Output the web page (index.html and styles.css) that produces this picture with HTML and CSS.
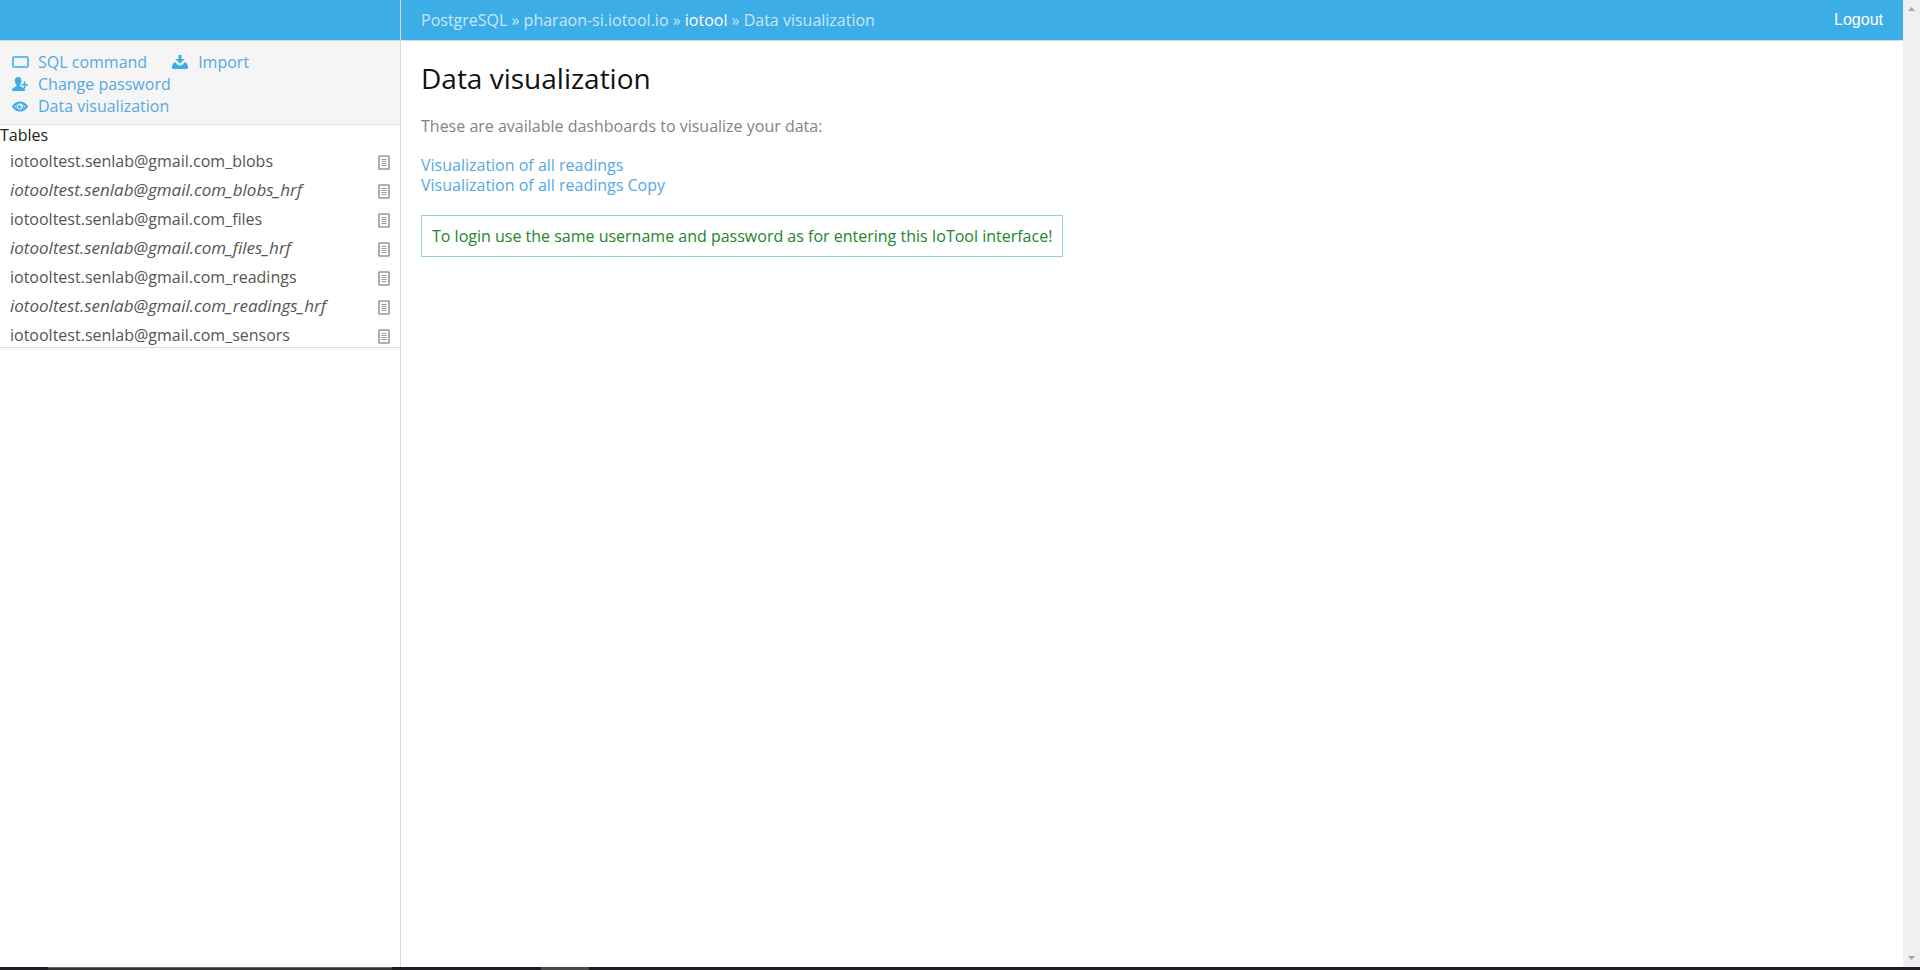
FILE: index.html
```html
<!DOCTYPE html>
<html lang="en">
<head>
<meta charset="utf-8">
<title>Data visualization - IoTool</title>
<link rel="stylesheet" href="styles.css">
</head>
<body>
<svg class="defs" aria-hidden="true">
  <symbol id="sheet" viewBox="0 0 12 15">
    <rect x="1" y="1" width="10" height="13" rx="0.5" fill="none" stroke="#999" stroke-width="1.6"/>
    <path d="M3.5 4.5h5M3.5 6.5h5M3.5 8.5h5M3.5 10.5h5" stroke="#999"/>
  </symbol>
</svg>
<div class="window">
  <aside class="sidebar">
    <div class="bar"></div>
    <nav class="actions">
      <div class="action-row">
        <a href="#sql"><svg class="icon" viewBox="0 0 18 16"><rect x="2" y="3" width="15" height="10" rx="1" fill="none" stroke="currentColor" stroke-width="1.6"/></svg>SQL command</a>
        <a href="#import"><svg class="icon" viewBox="0 0 18 16"><path d="M7.5 1h3v4h3.2L9 9.5 4.300 5h3.200zM3 8.500h2c.6 2 2 3 4 3s3.400-1 4-3h2l2 3.500v1.500q0 1.500-1.500 1.500h-13Q1 15 1 13.500V12z" fill="currentColor"/></svg>Import</a>
      </div>
      <div class="action-row">
        <a href="#password"><svg class="icon" viewBox="0 0 18 16"><path d="M7 1c2.500 0 3.400 1.500 3.400 3.800 0 2-.6 3-1.400 4v1.400l4 1.700q1 .5 1 3.100H1q0-2.600 1-3.100l3.500-1.700V8.800c-1-1-1.700-2-1.700-4C3.800 2.500 4.700 1 7 1zM12.800 5.500h1.600V8H17v1.600h-2.600v2.600h-1.600V9.600h-2.400V8h2.400z" fill="currentColor"/></svg>Change password</a>
      </div>
      <div class="action-row">
        <a href="#visualization"><svg class="icon" viewBox="0 0 18 16"><path fill-rule="evenodd" d="M1 8.500C3 5 5.500 3.500 9 3.500s6 1.500 8 5c-2 3.400-4.500 5-8 5s-6-1.600-8-5zm3 0c.5.900 1 1.500 1.600 2a4.500 4.500 0 0 1 0-4C5 7 4.500 7.600 4 8.500zm10 0c-.5-.9-1-1.500-1.600-2a4.500 4.500 0 0 1 0 4c.6-.5 1.100-1.100 1.600-2zM9 5.500a3 3 0 1 0 0 6 3 3 0 0 0 0-6z" fill="currentColor"/><path d="M9 6.500v2h2A2 2 0 1 1 9 6.500z" fill="currentColor"/></svg>Data visualization</a>
      </div>
    </nav>
    <h2 class="tables-title">Tables</h2>
    <ul class="tables">
      <li><a href="#t1">iotooltest.senlab@gmail.com_blobs</a><a href="#s1" aria-label="Structure"><svg class="sheet"><use href="#sheet"/></svg></a></li>
      <li><a class="view" href="#t2">iotooltest.senlab@gmail.com_blobs_hrf</a><a href="#s2" aria-label="Structure"><svg class="sheet"><use href="#sheet"/></svg></a></li>
      <li><a href="#t3">iotooltest.senlab@gmail.com_files</a><a href="#s3" aria-label="Structure"><svg class="sheet"><use href="#sheet"/></svg></a></li>
      <li><a class="view" href="#t4">iotooltest.senlab@gmail.com_files_hrf</a><a href="#s4" aria-label="Structure"><svg class="sheet"><use href="#sheet"/></svg></a></li>
      <li><a href="#t5">iotooltest.senlab@gmail.com_readings</a><a href="#s5" aria-label="Structure"><svg class="sheet"><use href="#sheet"/></svg></a></li>
      <li><a class="view" href="#t6">iotooltest.senlab@gmail.com_readings_hrf</a><a href="#s6" aria-label="Structure"><svg class="sheet"><use href="#sheet"/></svg></a></li>
      <li><a href="#t7">iotooltest.senlab@gmail.com_sensors</a><a href="#s7" aria-label="Structure"><svg class="sheet"><use href="#sheet"/></svg></a></li>
    </ul>
  </aside>
  <div class="page">
    <header class="bar">
      <div class="crumbs"><a href="#server">PostgreSQL</a> » <a href="#host">pharaon-si.iotool.io</a> » <a class="current" href="#db">iotool</a> » Data visualization</div>
      <button class="logout" type="button">Logout</button>
    </header>
    <main class="content">
      <h1>Data visualization</h1>
      <p class="intro">These are available dashboards to visualize your data:</p>
      <div class="dashboards">
        <a href="#all">Visualization of all readings</a>
        <a href="#copy">Visualization of all readings Copy</a>
      </div>
      <p class="message">To login use the same username and password as for entering this IoTool interface!</p>
    </main>
  </div>
  <div class="scrollbar">
    <svg class="arrow" viewBox="0 0 17 17"><path d="M5 11l3.500-4 3.500 4z" fill="#a3a3a3"/></svg>
    <svg class="arrow" viewBox="0 0 17 17"><path d="M5 6l3.500 4L12 6z" fill="#a3a3a3"/></svg>
  </div>
</div>
<div class="taskbar"><span class="search"></span><span class="app"></span></div>
</body>
</html>
```
FILE: styles.css
```css
* { box-sizing: border-box; }

body {
  margin: 0;
  height: 100vh;
  display: flex;
  flex-direction: column;
  font: 16px/20px "Open Sans", "Noto Sans", sans-serif;
  color: #222;
  background: #fff;
}

a { color: #55a9e3; text-decoration: none; }

.defs { position: absolute; width: 0; height: 0; }

.window { flex: 1; display: flex; min-height: 0; }

.bar {
  height: 41px;
  flex: none;
  background: #3dade8;
  border-bottom: 1px solid #d9d9d9;
}

.sidebar { width: 401px; flex: none; border-right: 1px solid #d9d9d9; }

.actions {
  padding: 10px 11px 7px;
  background: #f5f5f5;
  border-bottom: 1px solid #ddd;
}

.action-row { display: flex; gap: 24px; line-height: 22px; }
.action-row a { display: flex; align-items: center; }
.icon { width: 18px; height: 16px; margin-right: 9px; color: #3dade8; }

.tables-title { margin: 0; font-size: 16px; line-height: 20px; font-weight: 400; }

.tables {
  margin: 0;
  padding: 1px 10px 0;
  list-style: none;
  border-bottom: 1px solid #ddd;
}

.tables li { display: flex; justify-content: space-between; height: 29px; padding-top: 5px; }
.tables li:last-child { height: 27px; }
.tables a { color: #555; }
.tables .view { font-size: 17px; font-style: italic; }
.sheet { display: block; width: 12px; height: 15px; margin-top: 4px; }

.page { flex: 1; min-width: 0; }

header.bar {
  display: flex;
  align-items: center;
  justify-content: space-between;
  padding: 0 20px;
}

.crumbs, .crumbs a { color: #c8e7fa; }
.crumbs a.current { color: #fff; }

.logout {
  padding: 0;
  border: 0;
  background: none;
  color: #fff;
  font: 16px/20px "Liberation Sans", Arial, sans-serif;
}

.content { padding: 19px 20px; }

h1 { margin: 0; font-size: 28px; line-height: 36px; font-weight: 400; color: #111; }
.intro { margin: 20px 0 19px; color: #848484; }
.dashboards { display: flex; flex-direction: column; align-items: flex-start; }

.message {
  width: fit-content;
  margin: 20px 0 0;
  padding: 10px;
  border: 1px solid #90d9b1;
  color: #22862a;
}

.scrollbar {
  width: 17px;
  flex: none;
  display: flex;
  flex-direction: column;
  justify-content: space-between;
  background: #f0f0f0;
}

.arrow { width: 17px; height: 17px; }

.taskbar { height: 3px; flex: none; display: flex; background: #1b1f24; }
.search { width: 344px; margin-left: 48px; background: #363232; border-top: 1px solid #666; }
.app { width: 48px; margin-left: 149px; background: #4b4a4b; }
```
